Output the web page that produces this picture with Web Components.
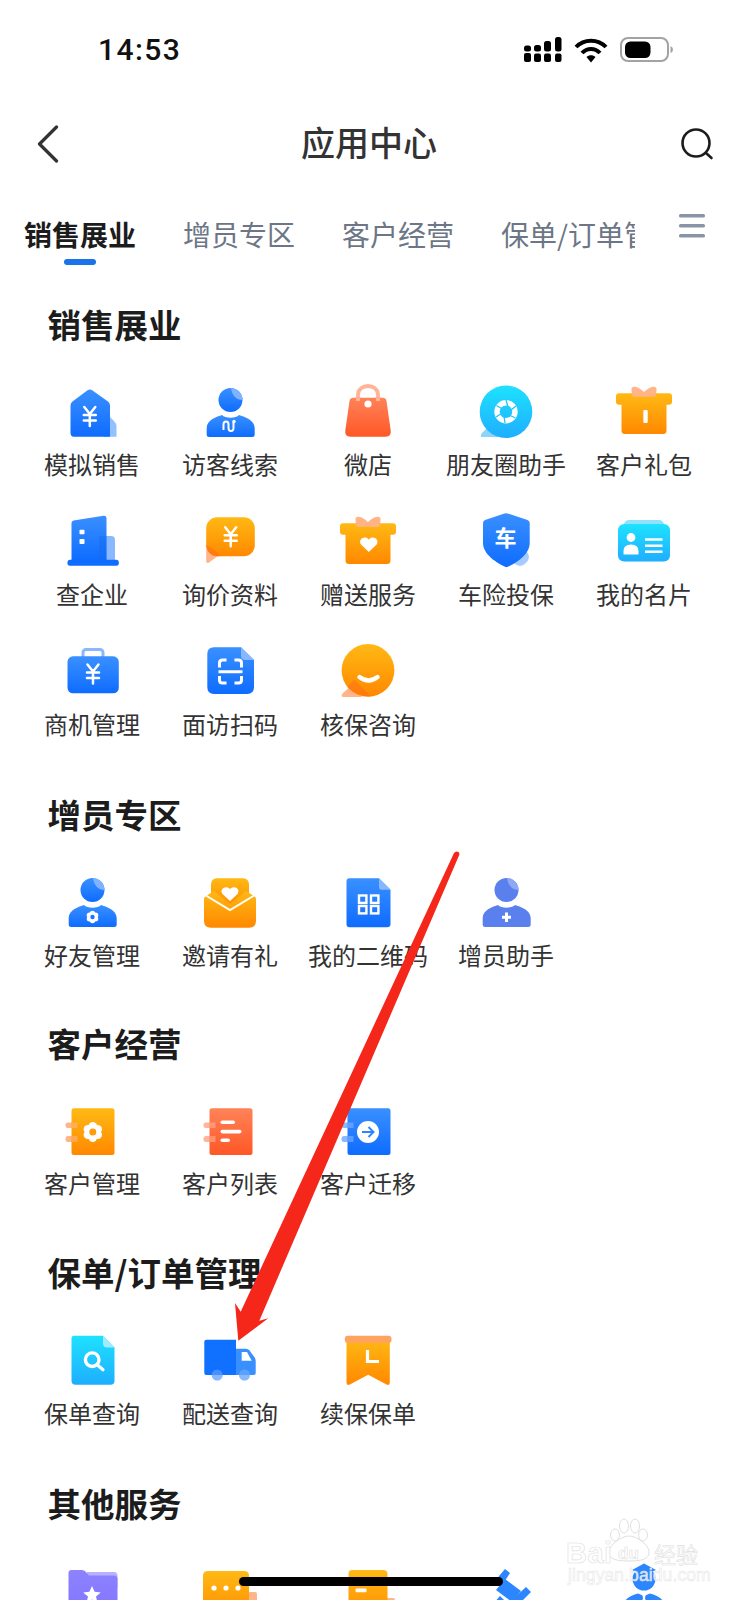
<!DOCTYPE html>
<html lang="zh-CN">
<head>
<meta charset="utf-8">
<title>应用中心</title>
<style>
  html, body { margin: 0; padding: 0; background: #fff; height: 1600px; overflow: hidden; }
</style>
</head>
<body>
<app-shell>
  <status-bar time="14:53"></status-bar>
  <nav-bar heading="应用中心"></nav-bar>
  <tab-strip>
    <tab-item active>销售展业</tab-item>
    <tab-item>增员专区</tab-item>
    <tab-item>客户经营</tab-item>
    <tab-item>保单/订单管理</tab-item>
  </tab-strip>
  <main-list>
    <app-section heading="销售展业" style="margin-bottom:21.5px">
      <app-tile icon="house">模拟销售</app-tile>
      <app-tile icon="visitor">访客线索</app-tile>
      <app-tile icon="bag">微店</app-tile>
      <app-tile icon="moments">朋友圈助手</app-tile>
      <app-tile icon="giftbar">客户礼包</app-tile>
      <app-tile icon="building">查企业</app-tile>
      <app-tile icon="quote">询价资料</app-tile>
      <app-tile icon="giftheart">赠送服务</app-tile>
      <app-tile icon="shield">车险投保</app-tile>
      <app-tile icon="card">我的名片</app-tile>
      <app-tile icon="case">商机管理</app-tile>
      <app-tile icon="scan">面访扫码</app-tile>
      <app-tile icon="smile">核保咨询</app-tile>
    </app-section>
    <app-section heading="增员专区">
      <app-tile icon="friend">好友管理</app-tile>
      <app-tile icon="invite">邀请有礼</app-tile>
      <app-tile icon="qr">我的二维码</app-tile>
      <app-tile icon="helper">增员助手</app-tile>
    </app-section>
    <app-section heading="客户经营" style="margin-bottom:20.5px">
      <app-tile icon="bookgear">客户管理</app-tile>
      <app-tile icon="booklist">客户列表</app-tile>
      <app-tile icon="bookmove">客户迁移</app-tile>
    </app-section>
    <app-section heading="保单/订单管理" style="margin-bottom:22px">
      <app-tile icon="policy">保单查询</app-tile>
      <app-tile icon="truck">配送查询</app-tile>
      <app-tile icon="renew">续保保单</app-tile>
    </app-section>
    <app-section heading="其他服务">
      <app-tile icon="folder"></app-tile>
      <app-tile icon="chat"></app-tile>
      <app-tile icon="doc"></app-tile>
      <app-tile icon="hammer"></app-tile>
      <app-tile icon="agent"></app-tile>
    </app-section>
  </main-list>
  <red-arrow></red-arrow>
  <baidu-mark></baidu-mark>
  <home-bar></home-bar>
</app-shell>

<script>
(function () {
  "use strict";

  var CJK = '"Noto Sans CJK SC", "Noto Sans", sans-serif';

  // Shared gradients; ids are scoped per shadow root so repeating them is fine.
  var DEFS =
    "<defs>" +
    grad("b", "#3a90ff", "#0e6cff") +
    grad("o", "#ffb914", "#ff8800") +
    grad("r", "#ff8358", "#ff5726") +
    grad("c", "#1ee2ff", "#1eaeff") +
    grad("p", "#8d82ff", "#7f74ff") +
    "</defs>";

  function grad(id, a, b) {
    return '<linearGradient id="' + id + '" x1="0" y1="0" x2="0" y2="1">' +
      '<stop offset="0" stop-color="' + a + '"/><stop offset="1" stop-color="' + b + '"/></linearGradient>';
  }

  function yen(x, y) {
    return '<path transform="translate(' + x + " " + y + ')" fill="none" stroke="#fff" stroke-width="2.5" stroke-linecap="round" stroke-linejoin="round" ' +
      'd="M-5.5 -9.5 L0 -2.5 L5.5 -9.5 M0 -2.5 V9.5 M-6 -1.5 H6 M-6 4 H6"/>';
  }

  function flower(x, y, r, hole) {
    var s = "";
    for (var i = 0; i < 6; i++) {
      var a = (i * Math.PI) / 3 + Math.PI / 6;
      s += '<circle cx="' + (x + Math.cos(a) * r * 0.62).toFixed(2) + '" cy="' + (y + Math.sin(a) * r * 0.62).toFixed(2) + '" r="' + (r * 0.46).toFixed(2) + '" fill="#fff"/>';
    }
    return s + '<circle cx="' + x + '" cy="' + y + '" r="' + (r * 0.7).toFixed(2) + '" fill="#fff"/>' +
      '<circle cx="' + x + '" cy="' + y + '" r="' + (r * 0.38).toFixed(2) + '" fill="' + hole + '"/>';
  }

  function person(fill, light) {
    return '<circle cx="30.5" cy="17" r="12" fill="' + fill + '"/>' +
      '<path d="M31 5 A12 12 0 0 1 42.5 17 Q33 17 31 5Z" fill="' + light + '"/>' +
      '<path d="M6.7 51.5 V45 C6.7 37 17 33.5 22 32 C25 35.5 36 35.5 39 32 C44 33.5 54.7 37 54.7 45 V51.5 Q54.7 54 52 54 H9.4 Q6.7 54 6.7 51.5Z" fill="' + fill + '"/>';
  }

  function gift(fill) {
    return '<path d="M30 9 C26 5 22 3.4 19.5 3.8 Q17 4.2 17.5 8 L18.5 13.7 H41.5 L42.5 8 Q43 4.2 40.5 3.8 C38 3.4 34 5 30 9Z" fill="#ffb48a"/>' +
      '<path d="M5 10.2 H55 Q58 10.2 58 13.2 V18.7 Q58 21.7 55 21.7 H52.5 V47.5 Q52.5 51 49 51 H11 Q7.5 51 7.5 47.5 V21.7 H5 Q2 21.7 2 18.7 V13.2 Q2 10.2 5 10.2Z" fill="url(#' + fill + ')"/>' +
      '<path d="M18 10.2 H42 L41.5 13.7 H18.5Z" fill="#ffb48a"/>';
  }

  function book(fill, tab) {
    return '<rect x="3.5" y="20.5" width="12" height="5.5" rx="2.5" fill="' + tab + '"/>' +
      '<rect x="3.5" y="34" width="12" height="6" rx="2.5" fill="' + tab + '"/>' +
      '<rect x="9.5" y="6.3" width="43" height="46.7" rx="2.5" fill="url(#' + fill + ')"/>' +
      '<rect x="9.5" y="20.5" width="6" height="5.5" fill="' + tab + '" opacity=".55"/>' +
      '<rect x="9.5" y="34" width="6" height="6" fill="' + tab + '" opacity=".55"/>';
  }

  function sheet(fill, fold) {
    return '<path d="M11.5 5.3 H41 L52.5 16.8 V51 Q52.5 54.3 49 54.3 H11.5 Q8.5 54.3 8.5 51 V8.5 Q8.5 5.3 11.5 5.3Z" fill="url(#' + fill + ')"/>' +
      '<path d="M41 5.3 L52.5 16.8 H44 Q41 16.8 41 14Z" fill="' + fold + '"/>';
  }

  var ICONS = {
    house:
      '<path d="M47 33 L52 38 Q54.5 40.5 54.5 43.5 V53.7 H42 Z" fill="#93c0ff"/>' +
      '<path d="M25.5 7.2 Q27.8 5.6 30.2 7.2 L46 18.5 Q48 20 48 22.5 V53.7 H12 Q8.5 53.7 8.5 50 V22.5 Q8.5 20 10.5 18.5Z" fill="url(#b)"/>' +
      yen(27.8, 33.5),
    visitor:
      person("url(#b)", "#7fb2ff") +
      '<path d="M23.5 47 V41.5 Q23.5 38.5 26 38.5 Q28.5 38.5 28.5 41.5 V45 Q28.5 48 31 48 Q33.5 48 33.5 45 V39" fill="none" stroke="#fff" stroke-width="2"/>' +
      '<circle cx="34" cy="38.5" r="1.7" fill="#fff"/>' ,
    bag:
      '<path d="M20 17 V12 C20 6 25 3 30 3 C35 3 40 6 40 12 V17" fill="none" stroke="#ffb49a" stroke-width="3.8"/>' +
      '<path d="M15.5 14.7 H44.5 Q48 14.7 48.5 18 L52.7 47.5 Q53.5 53.7 47.5 53.7 H12.5 Q6.5 53.7 7.3 47.5 L11.5 18 Q12 14.7 15.5 14.7Z" fill="url(#r)"/>' +
      '<path d="M18.1 14.7 H21.9 V18 H18.1Z M38.1 14.7 H41.9 V18 H38.1Z" fill="#ffb49a"/>' +
      '<circle cx="30" cy="21" r="3.6" fill="#fff"/>',
    moments:
      '<path d="M5 54 Q4 52 6 50 L14 42 L22 54Z" fill="#8dd4fb"/>' +
      '<circle cx="30" cy="28.7" r="26.3" fill="url(#c)"/>' +
      '<circle cx="30" cy="28.7" r="9" fill="none" stroke="#fff" stroke-width="5.4"/>' +
      '<path d="M30 17 L32 24 M40 23 L34.5 27.5 M39.5 35 L33 32 M29 40 L28 33 M20 34 L25.5 30.5 M20.5 22.5 L26.5 26" stroke="#22c4ff" stroke-width="1.3"/>',
    giftbar:
      gift("o") + '<rect x="29.3" y="27" width="4.4" height="13" rx="1" fill="#fff"/>',
    building:
      '<path d="M37 23 H49 Q53 23 53 27 V48 H37Z" fill="#8ab8ff"/>' +
      '<path d="M9.5 10 Q9.5 8 11.5 7.5 L41.5 2.8 Q44.5 2.5 44.5 5 V48 H9.5Z" fill="url(#b)"/>' +
      '<path d="M37 23 H44.5 V48 H37 Z" fill="#0f63e6" opacity=".28"/>' +
      '<rect x="5.5" y="46.7" width="51.3" height="6" rx="2.5" fill="#0e6cff"/>' +
      '<rect x="17.5" y="16.7" width="5" height="4.6" rx=".8" fill="#fff"/>' +
      '<rect x="17.5" y="26" width="5" height="5" rx=".8" fill="#fff"/>',
    quote:
      '<path d="M6.2 36 L6.2 48 Q6.2 51 9 49.5 L22 40Z" fill="#ffb48a"/>' +
      '<rect x="6.2" y="4.3" width="48.6" height="39" rx="11" fill="url(#o)"/>' +
      '<path d="M6.2 35 Q11 43.3 17 43.3 L20 43.3 Q16 36 6.2 32Z" fill="#ff6d1a" opacity=".55"/>' +
      yen(30.7, 23.7),
    giftheart:
      gift("o") +
      '<path d="M30.8 39 L23 31.5 C19.5 26.5 27 21.5 30.8 26.5 C34.6 21.5 42.1 26.5 38.6 31.5Z" fill="#fff"/>',
    shield:
      '<path d="M38 50 L50 38 Q56 44 50 50 Q44 56 38 50Z" fill="#a6ccff"/>' +
      '<path d="M28.5 .4 Q30 0 31.5 .4 L51.5 7 Q53.7 8 53.7 10 V30 C53.7 41 41 50 30.5 54.3 C20 50 7 41 7 30 V10 Q7 8 9 7Z" fill="url(#b)"/>' +
      '<text x="29.5" y="32.5" text-anchor="middle" font-size="22" font-weight="700" fill="#fff" font-family=' + "'" + CJK + "'" + '>车</text>',
    card:
      '<rect x="10" y="7" width="40" height="12" rx="5" fill="#8fe2fb"/>' +
      '<rect x="4" y="11" width="52" height="37.6" rx="6" fill="url(#c)"/>' +
      '<circle cx="17" cy="24.5" r="4.4" fill="#fff"/>' +
      '<path d="M9.5 41.5 V38 Q9.5 31.5 17 31.5 Q24.5 31.5 24.5 38 V41.5Z" fill="#fff"/>' +
      '<path d="M31 26.5 H48.5 M31 32.7 H48.5 M31 38.7 H48.5" stroke="#fff" stroke-width="2.6"/>',
    "case":
      '<rect x="21" y="6.5" width="20" height="11" rx="3" fill="none" stroke="#8ab8ff" stroke-width="3"/>' +
      '<rect x="5.5" y="13.3" width="51.3" height="37" rx="5.5" fill="url(#b)"/>' +
      yen(31, 31),
    scan:
      '<path d="M14 4.3 H41 L54 17 V44 Q54 51 47 51 H14 Q7.3 51 7.3 44 V11 Q7.3 4.3 14 4.3Z" fill="url(#b)"/>' +
      '<path d="M41 4.3 L54 17 H45 Q41 17 41 13Z" fill="#87b8ff"/>' +
      '<path d="M19.5 24.5 V20 Q19.5 17 22.5 17 H26.5 M34.5 17 H38.5 Q41.5 17 41.5 20 V24.5 M19.5 33 V37 Q19.5 40 22.5 40 H26.5 M34.5 40 H38.5 Q41.5 40 41.5 37 V33 M18.5 28.7 H42.5" fill="none" stroke="#fff" stroke-width="3"/>',
    smile:
      '<path d="M5.5 54 Q2 54 5 50 L14 42 L24 54Z" fill="#ffb48a"/>' +
      '<circle cx="30" cy="27.3" r="26.4" fill="url(#o)"/>' +
      '<path d="M9 44 Q14 39.5 16 36.5 L33 53.5 Q20 54 9 44Z" fill="#ff6d1a" opacity=".5"/>' +
      '<path d="M21.5 34 Q30.5 41 39.5 34" fill="none" stroke="#fff" stroke-width="4.4" stroke-linecap="round"/>',
    friend:
      person("url(#b)", "#7fb2ff") + flower(30.5, 44, 5.8, "#1b76ff"),
    invite:
      '<path d="M11 12 Q11 5.3 17 5.3 H43 Q49 5.3 49 12 V36 H11Z" fill="url(#o)"/>' +
      '<path d="M4 26 Q4 24 6 23 L14 18 L30 31 L46 18 L54 23 Q56 24 56 26 V48 Q56 54.7 49 54.7 H11 Q4 54.7 4 48Z" fill="url(#o)"/>' +
      '<path d="M5 22 L30 37 L55 22" fill="none" stroke="#fff" stroke-width="2"/>' +
      '<path d="M30 28 L22.5 21 C19 16 26 11.5 30 16 C34 11.5 41 16 37.5 21Z" fill="#fff"/>',
    qr:
      sheet("b", "#87b8ff") +
      '<g fill="none" stroke="#fff" stroke-width="2.4"><rect x="21" y="22.5" width="7.4" height="7.4"/><rect x="33" y="22.5" width="7.4" height="7.4"/><rect x="21" y="33" width="7.4" height="7.4"/><rect x="33" y="33" width="7.4" height="7.4"/></g>',
    helper:
      person("#5a80ee", "#8ea8f5") + '<path d="M30.5 39.5 V49 M26 44.2 H35" stroke="#fff" stroke-width="3"/>',
    bookgear:
      book("o", "#ffb48a") + flower(30.8, 30, 9.2, "#ff9c0a"),
    booklist:
      book("r", "#ffb59c") +
      '<rect x="20.5" y="18.5" width="14.5" height="3.6" rx="1.8" fill="#fff"/><rect x="20.5" y="27.8" width="21" height="3.6" rx="1.8" fill="#fff"/><rect x="20.5" y="36.5" width="9.5" height="3.6" rx="1.8" fill="#fff"/>',
    bookmove:
      book("b", "#8ab8ff") +
      '<circle cx="30" cy="30" r="11" fill="#fff"/>' +
      '<path d="M24 30 H35 M30.5 25 L35.5 30 L30.5 35" fill="none" stroke="#2a84ff" stroke-width="1.9"/>',
    policy:
      '<path d="M12 4.7 H41 L52.5 16.5 V50 Q52.5 53.7 48.5 53.7 H13.5 Q9.5 53.7 9.5 50 V7.5 Q9.5 4.7 12 4.7Z" fill="url(#c)"/>' +
      '<path d="M41 4.7 L52.5 16.5 H45 Q41 16.5 41 12.5Z" fill="#a0ecff"/>' +
      '<circle cx="30.2" cy="28.7" r="6.8" fill="none" stroke="#fff" stroke-width="3.4"/>' +
      '<path d="M35.2 33.7 L41 38.7" stroke="#fff" stroke-width="3.2" stroke-linecap="round"/>',
    truck:
      '<circle cx="17.2" cy="44" r="5.5" fill="#8ab8ff"/><circle cx="44.5" cy="44" r="5.5" fill="#8ab8ff"/>' +
      '<path d="M4.3 10.7 Q4.3 8.7 6.3 8.7 H36 V44 H6.3 Q4.3 44 4.3 42Z" fill="#1070ff"/>' +
      '<path d="M36 17.7 H46 Q48 17.7 49.3 19.2 L54.7 26.5 Q55.7 28 55.7 30 V42 Q55.7 44 53.7 44 H36Z" fill="#3a8fff"/>' +
      '<path d="M41.7 21 H47 L51.7 29.7 H41.7Z" fill="#fff"/>' +
      '<circle cx="17.2" cy="44" r="5.5" fill="#8ab8ff" opacity=".45"/><circle cx="44.5" cy="44" r="5.5" fill="#8ab8ff" opacity=".45"/>',
    renew:
      '<path d="M8.5 8 H51.8 V51.5 Q51.8 55 48.5 53.5 L30.2 43.7 L11.8 53.5 Q8.5 55 8.5 51.5Z" fill="url(#o)"/>' +
      '<rect x="6.8" y="4.7" width="46.7" height="7.3" rx="3" fill="#ffa45f"/>' +
      '<path d="M29.5 19 V30.5 H41" fill="none" stroke="#fff" stroke-width="3.2"/>',
    folder:
      '<path d="M25 10 H52 Q55.5 10 55.5 13.5 V26 H25Z" fill="#b9b1ff"/>' +
      '<path d="M6.5 11 Q6.5 8 9.5 8 H20 Q22 8 23.5 9.5 L27 13.5 H52 Q55.5 13.5 55.5 17 V60 H6.5Z" fill="url(#p)"/>' +
      '<path d="M30 24 L32.6 29.8 L38.8 30.4 L34 34.6 L35.5 40.7 L30 37.5 L24.5 40.7 L26 34.6 L21.2 30.4 L27.4 29.8Z" fill="#fff"/>',
    chat:
      '<rect x="48" y="30" width="9" height="30" rx="2" fill="#ffb48a"/>' +
      '<path d="M8 9 H44 Q49 9 49 14 V60 H3 V14 Q3 9 8 9Z" fill="url(#o)"/>' +
      '<circle cx="14" cy="26" r="2.6" fill="#fff"/><circle cx="26" cy="26" r="2.6" fill="#fff"/><circle cx="38" cy="26" r="2.6" fill="#fff"/>',
    doc:
      '<rect x="38" y="36" width="19" height="24" rx="2" fill="#ffb48a"/>' +
      '<path d="M14 8 H45 Q49.5 8 49.5 12 V60 H10.5 V12 Q10.5 8 14 8Z" fill="url(#o)"/>' +
      '<rect x="17.5" y="26.5" width="11" height="3.8" rx="1" fill="#fff"/>',
    hammer:
      '<path d="M29 7 L34 11 L25 25 L18 20Z" fill="#2b86ff"/>' +
      '<path d="M50 25 L55 30 L42 43 L37 37Z" fill="#2b86ff"/>' +
      '<path d="M29 17 L45 29 L36 40 L20 28Z" fill="#2b86ff"/>' +
      '<path d="M24 34 L30 40 L18 56 L10 50Z" fill="#2b86ff"/>',
    agent:
      '<path d="M30 1.5 L42 8 L30 13 L18 8Z" fill="#2b86ff"/>' +
      '<circle cx="30" cy="17" r="11.5" fill="#2b86ff"/>' +
      '<path d="M9 46 Q9 35 24 31.5 L30 34 L36 31.5 Q51 35 51 46 V60 H9Z" fill="#2b86ff"/>' +
      '<path d="M28 31.5 H32 L31 36 L32.5 42 L30 44 L27.5 42 L29 36Z" fill="#fff"/>'
  };

  function define(name, css, html) {
    customElements.define(name, class extends HTMLElement {
      connectedCallback() {
        if (this.shadowRoot) return;
        var root = this.attachShadow({ mode: "open" });
        root.innerHTML = "<style>" + css + "</style>" + (typeof html === "function" ? html(this) : html);
      }
    });
  }

  define("app-shell",
    ":host{display:block;position:relative;width:738px;height:1600px;overflow:hidden;background:#fff;font-family:" + CJK + ";}",
    "<slot></slot>");

  define("status-bar",
    ':host{display:flex;align-items:center;justify-content:space-between;height:100px;box-sizing:border-box;padding:0 64px 0 98px;}' +
    '.time{font:500 30px/1 Roboto,"Liberation Sans",sans-serif;letter-spacing:1.4px;color:#111;}' +
    ".icons{display:flex;align-items:center;gap:12px;}svg{display:block;}",
    function (el) {
      return '<span class="time">' + el.getAttribute("time") + "</span>" +
        '<div class="icons">' +
        '<svg width="38" height="26" viewBox="0 0 38 26" fill="#000">' +
        '<rect x="0" y="16" width="7" height="9" rx="2"/><rect x="0" y="8.5" width="7" height="6" rx="2.5"/>' +
        '<rect x="10" y="16.5" width="7" height="8.5" rx="2"/><rect x="10" y="8" width="7" height="6.5" rx="2.5"/>' +
        '<rect x="20" y="16.5" width="7" height="8.5" rx="2"/><rect x="20" y="4" width="7" height="10.5" rx="2.5"/>' +
        '<rect x="31" y="16.5" width="6.5" height="8.5" rx="2"/><rect x="31" y="0" width="6.5" height="14.5" rx="2.5"/></svg>' +
        '<svg width="34" height="25" viewBox="0 0 34 25" fill="none" stroke="#000" stroke-width="4">' +
        '<path d="M2 9 C10 .5 24 .5 32 9"/><path d="M8 15 C13 9.5 21 9.5 26 15"/><path d="M12.5 19 L17 24.5 L21.5 19 C19 16.7 15 16.7 12.5 19Z" fill="#000" stroke="none"/></svg>' +
        '<svg width="54" height="26" viewBox="0 0 54 26"><rect x="1" y="1" width="47" height="23" rx="7" fill="#fff" stroke="#a3a3a3" stroke-width="2"/>' +
        '<rect x="5" y="4.5" width="25.5" height="16.5" rx="5.5" fill="#000"/><path d="M50.5 9 Q53 10 53 12.5 Q53 15 50.5 16Z" fill="#a3a3a3"/></svg>' +
        "</div>";
    });

  define("nav-bar",
    ":host{display:flex;align-items:center;justify-content:space-between;height:88px;box-sizing:border-box;padding:0 24px 0 36px;}" +
    "h1{margin:0;font-size:34px;height:44px;line-height:40px;font-weight:500;color:#333;position:absolute;left:0;right:0;text-align:center;}" +
    "svg{display:block;position:relative;}",
    function (el) {
      return '<svg width="24" height="38" viewBox="0 0 24 38" fill="none" stroke="#333" stroke-width="3.2" stroke-linecap="round" stroke-linejoin="round"><path d="M20.5 2 L3.5 19 L20.5 36"/></svg>' +
        "<h1>" + el.getAttribute("heading") + "</h1>" +
        '<svg width="34" height="34" viewBox="0 0 34 34" fill="none" stroke="#1c1c1c" stroke-width="2.6" stroke-linecap="round"><circle cx="16" cy="16" r="13.5"/><path d="M26 26 L31.5 31"/></svg>';
    });

  define("tab-strip",
    ":host{display:flex;height:92px;box-sizing:border-box;padding-top:26px;}" +
    ".scroll{display:flex;gap:47px;width:611px;margin-left:24px;overflow:hidden;flex:none;height:54px;}" +
    ".more{margin-left:44px;flex:none;display:block;}",
    '<div class="scroll"><slot></slot></div>' +
    '<svg class="more" width="26" height="24" viewBox="0 0 26 24" fill="#8a94a6"><rect width="26" height="3.6" rx="1.6"/><rect y="10" width="26" height="3.6" rx="1.6"/><rect y="20" width="26" height="3.6" rx="1.6"/></svg>');

  define("tab-item",
    ":host{display:flex;flex-direction:column;align-items:center;flex:none;font-size:28px;line-height:40px;color:#6c7686;white-space:nowrap;}" +
    ":host([active]){color:#1c1c1c;font-weight:700;}" +
    ".bar{display:none;width:32px;height:6px;border-radius:3px;background:#1a73e8;margin-top:5px;}" +
    ":host([active]) .bar{display:block;}",
    '<slot></slot><span class="bar"></span>');

  define("main-list", ":host{display:block;padding-top:23.6px;}", "<slot></slot>");

  define("app-section",
    ":host{display:block;margin-bottom:19.5px;}" +
    "h2{margin:0;padding-left:47.5px;font-size:33.5px;line-height:40px;height:44px;font-weight:700;color:#1c1c1c;}" +
    ".grid{display:grid;grid-template-columns:repeat(5,138px);padding:35px 0 0 23px;}",
    function (el) {
      return "<h2>" + el.getAttribute("heading") + '</h2><div class="grid"><slot></slot></div>';
    });

  define("app-tile",
    ":host{display:flex;flex-direction:column;align-items:center;height:130px;}" +
    "svg{display:block;width:60px;height:60px;flex:none;overflow:visible;}" +
    ".label{margin-top:5.5px;font-size:24px;line-height:32px;color:#333;white-space:nowrap;}",
    function (el) {
      return '<svg viewBox="0 0 60 60">' + DEFS + ICONS[el.getAttribute("icon")] + "</svg>" +
        '<span class="label"><slot></slot></span>';
    });

  define("red-arrow",
    ":host{position:absolute;inset:0;display:block;pointer-events:none;}svg{display:block;}",
    '<svg width="738" height="1600" viewBox="0 0 738 1600"><path d="M454 853 Q456 850.5 458.5 852 Q460 853.5 459 855.5 L259.3 1320.7 L268.3 1318.3 L238.3 1340.7 L235 1303 L240.7 1311.7Z" fill="#f4271a"/></svg>');

  define("baidu-mark",
    ':host{position:absolute;left:566px;top:1518px;width:136px;height:68px;display:block;font-family:"Liberation Sans",sans-serif;color:rgba(255,255,255,.8);-webkit-text-stroke:.6px #e0e0e0;}' +
    "span{position:absolute;white-space:nowrap;}" +
    ".bai{left:0;top:22px;font-size:29px;line-height:26px;font-weight:700;letter-spacing:.5px;}" +
    ".du{left:52px;top:27px;font-size:17px;line-height:18px;font-weight:700;}" +
    '.cn{left:88px;top:23px;font-size:22px;line-height:24px;font-family:"Noto Sans CJK SC",sans-serif;}' +
    ".url{left:2px;top:48px;font-size:17.5px;line-height:18px;letter-spacing:.1px;-webkit-text-stroke:.5px #e4e4e4;}" +
    "svg{position:absolute;left:40px;top:0;}",
    '<svg width="46" height="46" viewBox="0 0 46 46" fill="none" stroke="#e0e0e0" stroke-width="1">' +
    '<ellipse cx="9" cy="17" rx="4.5" ry="6"/><ellipse cx="18" cy="8" rx="4.5" ry="7"/><ellipse cx="29" cy="8" rx="4.5" ry="7"/><ellipse cx="37" cy="17" rx="4.5" ry="6"/>' +
    '<path d="M3 33 C4 26 16 18 23 18 C30 18 42 26 43 33 C44 42 34 43 23 43 C12 43 2 42 3 33Z"/></svg>' +
    '<span class="bai">Bai</span><span class="du">du</span><span class="cn">经验</span><span class="url">jingyan.baidu.com</span>');

  define("home-bar",
    ":host{position:absolute;left:239px;top:1577px;width:264px;height:9px;border-radius:5px;background:#000;display:block;}",
    "");
})();
</script>
</body>
</html>
